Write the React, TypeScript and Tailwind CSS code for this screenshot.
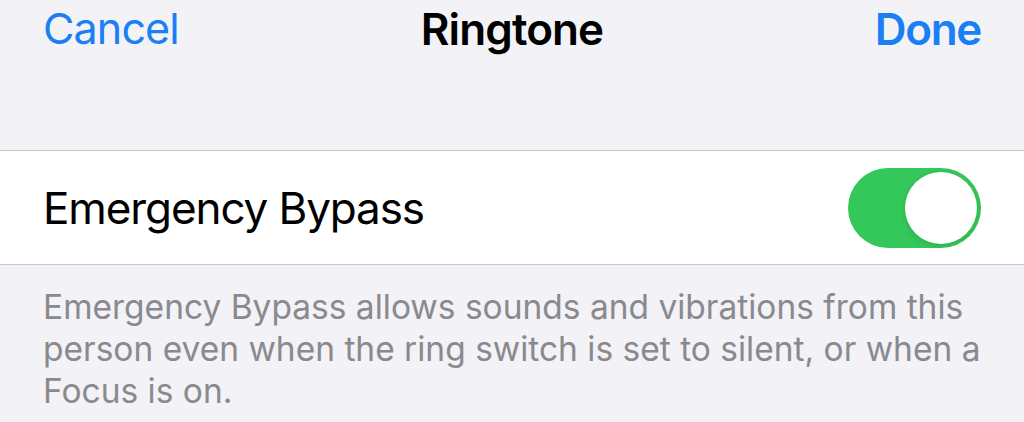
import React from 'react';

const Toggle = ({ on }: { on: boolean }) => {
  return (
    <div
      className={`flex h-[80px] w-[133px] items-center rounded-full p-[4px] ${
        on ? 'justify-end bg-[#34c759]' : 'justify-start bg-[#e9e9eb]'
      }`}
    >
      <div className="h-[72px] w-[72px] rounded-full bg-white shadow-[0_2px_6px_rgba(0,0,0,0.12)]" />
    </div>
  );
};

const App = () => {
  return (
    <div className="h-[422px] w-[1024px] overflow-hidden bg-[#f2f2f7] font-['Inter',sans-serif]">
      {/* Nav bar */}
      <div className="grid h-[62px] grid-cols-3 items-start px-[43px] pt-[7px] leading-none">
        <button className="justify-self-start text-[43px] leading-none tracking-[-0.02em] text-[#1a7ef5]">Cancel</button>
        <h1 className="justify-self-center whitespace-nowrap text-[44px] font-semibold leading-none tracking-[-0.02em] text-black">
          Ringtone
        </h1>
        <button className="justify-self-end text-[44px] font-semibold leading-none tracking-[-0.03em] text-[#1a7ef5]">Done</button>
      </div>

      {/* Setting row */}
      <div className="mt-[88px] flex h-[115px] items-center justify-between border-y border-[#c8c7cc] bg-white px-[43px]">
        <span className="text-[44px] leading-none tracking-[-0.025em] text-black">Emergency Bypass</span>
        <Toggle on />
      </div>

      {/* Footer note */}
      <p className="pl-[43px] pr-[20px] pt-[21px] text-[33.5px] leading-[42px] text-[#8a8a8e]">
        Emergency Bypass allows sounds and vibrations from this person even when the ring switch is set to silent, or when a
        Focus is on.
      </p>
    </div>
  );
};

export default App;
